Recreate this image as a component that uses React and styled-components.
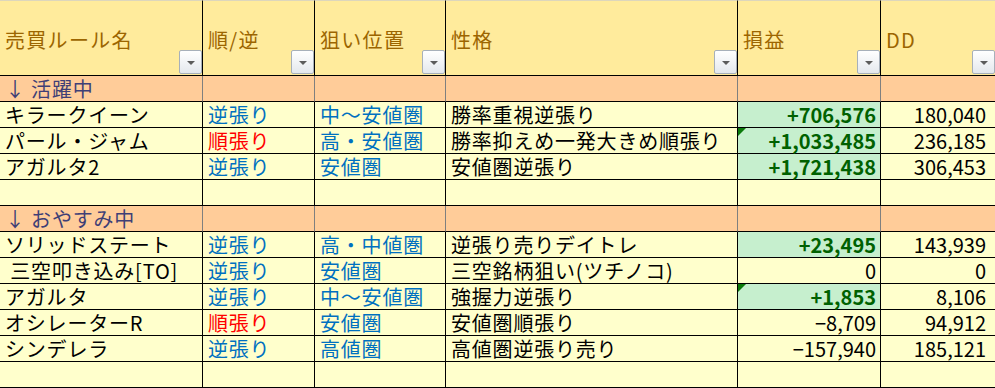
import React from 'react';
import styled, { createGlobalStyle } from 'styled-components';

const GlobalStyle = createGlobalStyle`
  html, body {
    margin: 0;
    padding: 0;
    background: #ffffff;
  }
  body {
    font-family: "Noto Sans CJK JP", "Noto Sans", sans-serif;
  }
`;

const COLS = '203px 112px 131px 292px 143px 114px';

const Sheet = styled.div`
  display: grid;
  grid-template-columns: ${COLS};
  width: 995px;
  font-family: "Noto Sans CJK JP", "Noto Sans", sans-serif;
  font-size: 20px;
  line-height: 20px;
  color: #000;
`;

const HeadCell = styled.div`
  box-sizing: border-box;
  height: 76px;
  display: flex;
  align-items: center;
  padding-left: 5px;
  padding-top: 3px;
  background: #ffeb9c;
  color: #9c6500;
  border-top: 1px solid #ddd6bc;
  border-bottom: 1px solid #000;
  border-right: ${(p) => (p.last ? 'none' : '1px solid #000')};
  letter-spacing: 1.3px;
`;

const HeadLabel = styled.span`
  flex: 1;
  white-space: nowrap;
`;

const FilterButton = styled.span`
  align-self: flex-end;
  margin-bottom: 1px;
  width: 21px;
  height: 22px;
  flex-shrink: 0;
  border: 1px solid #a7b0ba;
  border-radius: 2px;
  background: linear-gradient(#ffffff, #e4e8ed);
  display: flex;
  align-items: center;
  justify-content: center;

  &::after {
    content: '';
    margin-top: 2px;
    border-left: 4px solid transparent;
    border-right: 4px solid transparent;
    border-top: 4px solid #5c5c5c;
  }
`;

const GroupCell = styled.div`
  box-sizing: border-box;
  height: 26px;
  display: flex;
  align-items: center;
  padding-left: 5px;
  background: #ffcc99;
  color: #3f3f76;
  border-bottom: 1px solid #000;
  border-right: ${(p) => (p.last ? 'none' : '1px solid #7f7f7f')};
  letter-spacing: 0.8px;
  white-space: pre;
`;

const Cell = styled.div`
  position: relative;
  box-sizing: border-box;
  height: 26px;
  display: flex;
  align-items: center;
  justify-content: ${(p) => (p.num ? 'flex-end' : 'flex-start')};
  padding: ${(p) => (p.num ? `0 ${p.padR || 4}px 0 0` : '0 0 0 5px')};
  background: ${(p) => (p.good ? '#c6efce' : '#ffffcc')};
  color: ${(p) => p.tone || '#000'};
  font-weight: ${(p) => (p.good ? 700 : 400)};
  border-bottom: 1px solid #000;
  border-right: ${(p) => (p.last ? 'none' : '1px solid #000')};
  letter-spacing: ${(p) => (p.num ? '0' : '0.8px')};
  white-space: pre;
`;

const Flag = styled.span`
  position: absolute;
  top: 0;
  left: 0;
  border-top: 8px solid #0b7a0b;
  border-right: 8px solid transparent;
`;

const headers = ['売買ルール名', '順/逆', '狙い位置', '性格', '損益', 'DD'];

const BLUE = '#0070c0';
const RED = '#ff0000';
const GREEN = '#006100';

const rows = [
  { group: '↓ 活躍中' },
  { name: 'キラークイーン', dir: '逆張り', pos: '中～安値圏', kind: '勝率重視逆張り', pl: '+706,576', dd: '180,040', good: true },
  { name: 'パール・ジャム', dir: '順張り', pos: '高・安値圏', kind: '勝率抑えめ一発大きめ順張り', pl: '+1,033,485', dd: '236,185', good: true, flag: true },
  { name: 'アガルタ2', dir: '逆張り', pos: '安値圏', kind: '安値圏逆張り', pl: '+1,721,438', dd: '306,453', good: true },
  { blank: true },
  { group: '↓ おやすみ中' },
  { name: 'ソリッドステート', dir: '逆張り', pos: '高・中値圏', kind: '逆張り売りデイトレ', pl: '+23,495', dd: '143,939', good: true },
  { name: ' 三空叩き込み[TO]', dir: '逆張り', pos: '安値圏', kind: '三空銘柄狙い(ツチノコ)', pl: '0', dd: '0' },
  { name: 'アガルタ', dir: '逆張り', pos: '中～安値圏', kind: '強握力逆張り', pl: '+1,853', dd: '8,106', good: true, flag: true },
  { name: 'オシレーターR', dir: '順張り', pos: '安値圏', kind: '安値圏順張り', pl: '−8,709', dd: '94,912' },
  { name: 'シンデレラ', dir: '逆張り', pos: '高値圏', kind: '高値圏逆張り売り', pl: '−157,940', dd: '185,121' },
  { blank: true },
];

function Row({ row }) {
  if (row.group) {
    return headers.map((_, i) => (
      <GroupCell key={i} last={i === headers.length - 1}>
        {i === 0 ? row.group : ''}
      </GroupCell>
    ));
  }
  if (row.blank) {
    return headers.map((_, i) => <Cell key={i} last={i === headers.length - 1} />);
  }
  return (
    <>
      <Cell>{row.name}</Cell>
      <Cell tone={row.dir === '順張り' ? RED : BLUE}>{row.dir}</Cell>
      <Cell tone={BLUE}>{row.pos}</Cell>
      <Cell>{row.kind}</Cell>
      <Cell num good={row.good} tone={row.good ? GREEN : '#000'}>
        {row.flag && <Flag />}
        {row.pl}
      </Cell>
      <Cell num last padR={9}>{row.dd}</Cell>
    </>
  );
}

export default function App() {
  return (
    <>
      <GlobalStyle />
      <Sheet>
        {headers.map((h, i) => (
          <HeadCell key={h} last={i === headers.length - 1}>
            <HeadLabel>{h}</HeadLabel>
            <FilterButton />
          </HeadCell>
        ))}
        {rows.map((row, i) => (
          <Row key={i} row={row} />
        ))}
      </Sheet>
    </>
  );
}
